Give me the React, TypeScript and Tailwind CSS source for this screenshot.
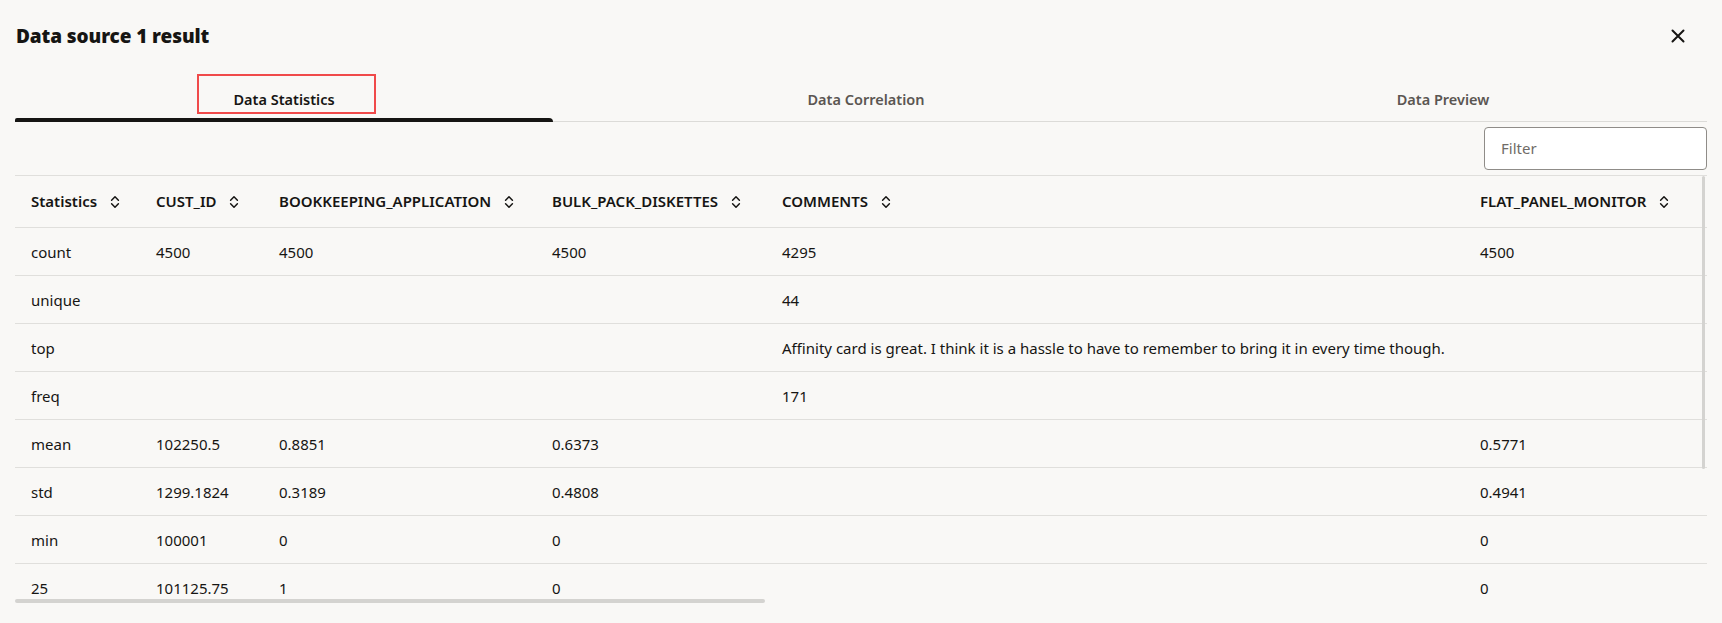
import React from "react";

const SortIcon = () => (
  <svg width="10" height="14" viewBox="0 0 10 14" fill="none" className="ml-[13px] shrink-0">
    <path d="M1.6 5.2 L5 1.8 L8.4 5.2" stroke="#161513" strokeWidth="1.5" strokeLinecap="round" strokeLinejoin="round" />
    <path d="M1.6 8.8 L5 12.2 L8.4 8.8" stroke="#161513" strokeWidth="1.5" strokeLinecap="round" strokeLinejoin="round" />
  </svg>
);

const widths = ["w-[125px]", "w-[123px]", "w-[273px]", "w-[230px]", "w-[698px]", "w-[244px]"];
const headers = [
  "Statistics",
  "CUST_ID",
  "BOOKKEEPING_APPLICATION",
  "BULK_PACK_DISKETTES",
  "COMMENTS",
  "FLAT_PANEL_MONITOR",
];

const rows: string[][] = [
  ["count", "4500", "4500", "4500", "4295", "4500"],
  ["unique", "", "", "", "44", ""],
  ["top", "", "", "", "Affinity card is great. I think it is a hassle to have to remember to bring it in every time though.", ""],
  ["freq", "", "", "", "171", ""],
  ["mean", "102250.5", "0.8851", "0.6373", "", "0.5771"],
  ["std", "1299.1824", "0.3189", "0.4808", "", "0.4941"],
  ["min", "100001", "0", "0", "", "0"],
  ["25", "101125.75", "1", "0", "", "0"],
];

export default function App() {
  return (
    <div className="w-[1722px] h-[623px] overflow-hidden bg-[#f9f8f6] px-[15px] font-['Noto_Sans',sans-serif] text-[#161513]">
      {/* Header */}
      <div className="flex items-center justify-between pt-[22px] h-[50px]">
        <h1 className="text-[19px] leading-[28px] font-black tracking-[-0.1px] pl-[1px]">Data source 1 result</h1>
        <button className="mr-[21px] flex h-[16px] w-[16px] items-center justify-center">
          <svg width="14" height="14" viewBox="0 0 14 14" fill="none">
            <path d="M1.5 1.5 L12.5 12.5 M12.5 1.5 L1.5 12.5" stroke="#161513" strokeWidth="2" strokeLinecap="round" />
          </svg>
        </button>
      </div>

      {/* Tabs */}
      <div className="relative mt-[26px] flex h-[46px] border-b border-[#dcdbd8]">
        <div className="relative flex w-[538px] items-center justify-center pt-[2px]">
          <span className="text-[14.5px] font-semibold text-[#161513]">Data Statistics</span>
          <div className="absolute bottom-[-1px] left-0 right-0 h-[4px] rounded-tr-[4px] rounded-tl-[2px] bg-[#161513]" />
          <div className="absolute left-[182px] top-[-2px] h-[40px] w-[179px] border-2 border-[#f04a4a]" />
        </div>
        <div className="flex w-[626px] items-center justify-center pt-[2px]">
          <span className="text-[14.5px] font-semibold text-[#5b5652]">Data Correlation</span>
        </div>
        <div className="flex flex-1 items-center justify-center pt-[2px]">
          <span className="text-[14.5px] font-semibold text-[#5b5652]">Data Preview</span>
        </div>
      </div>

      {/* Filter */}
      <div className="mt-[5px] flex justify-end">
        <div className="flex h-[43px] w-[223px] items-center rounded-[4px] border border-[#8f8c88] bg-white pl-[16px] text-[15px] text-[#6f6b67]">
          Filter
        </div>
      </div>

      {/* Table */}
      <div className="relative mt-[5px] h-[432px] overflow-hidden border-t border-[#e0dfdc]">
        <div className="w-full">
          <div className="flex h-[52px] items-center border-b border-[#e0dfdc]">
            {headers.map((h, i) => (
              <div key={h} className={`${widths[i]} flex shrink-0 items-center pl-[16px] text-[15px] font-semibold`}>
                <span>{h}</span>
                <SortIcon />
              </div>
            ))}
          </div>
          {rows.map((r, ri) => (
            <div key={ri} className="flex h-[48px] items-center border-b border-[#e0dfdc] pt-[2px]">
              {r.map((c, ci) => (
                <div key={ci} className={`${widths[ci]} shrink-0 whitespace-nowrap pl-[16px] text-[15px]`}>
                  {c}
                </div>
              ))}
            </div>
          ))}
        </div>
        {/* vertical scroll thumb */}
        <div className="absolute right-[2px] top-0 h-[293px] w-[3px] rounded-full bg-[#d4d3d0]" />
        {/* horizontal scroll thumb */}
        <div className="absolute left-0 top-[423px] h-[4px] w-[750px] rounded-full bg-[#d4d3d0]" />
      </div>
    </div>
  );
}
